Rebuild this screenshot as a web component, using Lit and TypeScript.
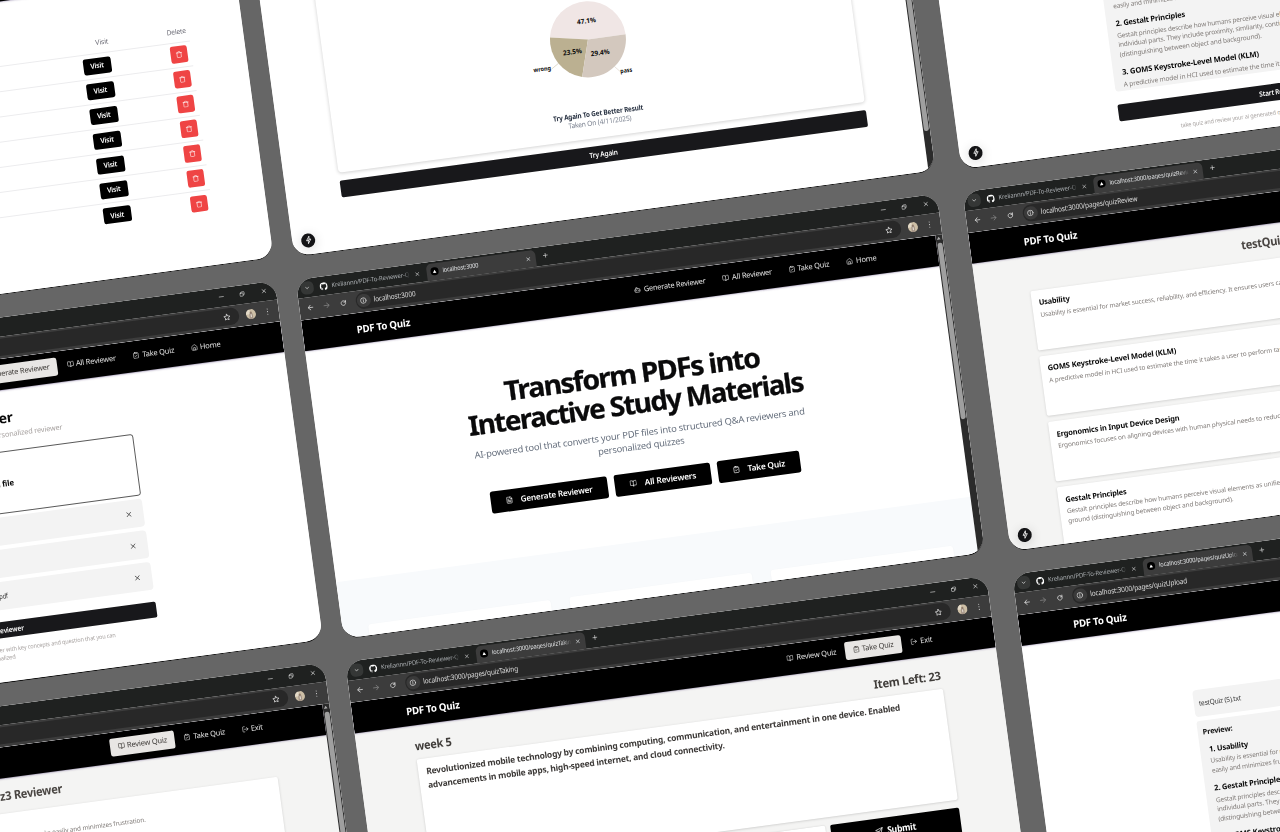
import { LitElement, html, css, svg, nothing } from "lit";
import { customElement, property, query } from "lit/decorators.js";
import { styleMap } from "lit/directives/style-map.js";

/* A single line of text, condensed or widened to an exact measure. */
@customElement("fit-line")
class FitLine extends LitElement {
  @property({ type: String }) text = "";
  @property({ type: Number }) w = 0;
  @query("span") private inner!: HTMLSpanElement;

  static styles = css`
    :host { display: inline-block; white-space: pre; flex: none; text-align: left; vertical-align: top; }
    span { display: inline-block; transform-origin: 0 50%; letter-spacing: var(--track, -0.022em); }
  `;

  updated() {
    if (!this.w) return;
    const natural = parseFloat(getComputedStyle(this.inner).width);
    this.inner.style.transform = `scaleX(${this.w / natural})`;
    this.style.width = `${this.w}px`;
  }

  render() {
    return html`<span>${this.text}</span>`;
  }
}

const fit = (text: string, w = 0, cls = "") =>
  html`<fit-line class=${cls} .text=${text} .w=${w}></fit-line>`;

const ICONS: Record<string, unknown> = {
  bot: svg`<path d="M12 8V4H8"/><rect width="16" height="12" x="4" y="8" rx="2"/><path d="M2 14h2M20 14h2M15 13v2M9 13v2"/>`,
  book: svg`<path d="M12 7v14"/><path d="M3 18a1 1 0 0 1-1-1V4a1 1 0 0 1 1-1h5a4 4 0 0 1 4 4 4 4 0 0 1 4-4h5a1 1 0 0 1 1 1v13a1 1 0 0 1-1 1h-6a3 3 0 0 0-3 3 3 3 0 0 0-3-3z"/>`,
  clip: svg`<rect width="8" height="4" x="8" y="2" rx="1"/><path d="M16 4h2a2 2 0 0 1 2 2v14a2 2 0 0 1-2 2H6a2 2 0 0 1-2-2V6a2 2 0 0 1 2-2h2"/><path d="m9 14 2 2 4-4"/>`,
  home: svg`<path d="M15 21v-8a1 1 0 0 0-1-1h-4a1 1 0 0 0-1 1v8"/><path d="M3 10a2 2 0 0 1 .7-1.5l7-6a2 2 0 0 1 2.6 0l7 6A2 2 0 0 1 21 10v9a2 2 0 0 1-2 2H5a2 2 0 0 1-2-2z"/>`,
  exit: svg`<path d="M9 21H5a2 2 0 0 1-2-2V5a2 2 0 0 1 2-2h4"/><path d="m16 17 5-5-5-5M21 12H9"/>`,
  file: svg`<path d="M15 2H6a2 2 0 0 0-2 2v16a2 2 0 0 0 2 2h12a2 2 0 0 0 2-2V7Z"/><path d="M14 2v4a2 2 0 0 0 2 2h4M10 9H8M16 13H8M16 17H8"/>`,
  trash: svg`<path d="M3 6h18M19 6v14a2 2 0 0 1-2 2H7a2 2 0 0 1-2-2V6M8 6V4a2 2 0 0 1 2-2h4a2 2 0 0 1 2 2v2"/>`,
  send: svg`<path d="M22 2 11 13M22 2l-7 20-4-9-9-4Z"/>`,
  x: svg`<path d="M5 5l14 14M19 5 5 19"/>`,
  plus: svg`<path d="M12 4v16M4 12h16"/>`,
  down: svg`<path d="m5 9 7 7 7-7"/>`,
  back: svg`<path d="M21 12H4M11 4l-8 8 8 8"/>`,
  fwd: svg`<path d="M3 12h17M13 4l8 8-8 8"/>`,
  reload: svg`<path d="M20 12a8 8 0 1 1-2.5-5.8L20 8.5M20 3v6h-6"/>`,
  info: svg`<circle cx="12" cy="12" r="9.5"/><path d="M12 11v6M12 6.7v1"/>`,
  star: svg`<path d="m12 2.5 2.9 6.3 6.8.8-5 4.700 1.300 6.800-6-3.400-6 3.400 1.300-6.800-5-4.700 6.800-.8z"/>`,
  min: svg`<path d="M3 12h18"/>`,
  restore: svg`<rect x="3" y="8" width="13" height="13" rx="2"/><path d="M8 7V5a2 2 0 0 1 2-2h9a2 2 0 0 1 2 2v9a2 2 0 0 1-2 2h-2"/>`,
  kebab: svg`<path d="M12 3.500v.1M12 12v.1M12 20.500v.1"/>`,
  bolt: svg`<path d="M13.500 3 6 13.500h5.500M10.500 21 18 10.500h-5.500M13.500 3v7.500M10.500 21v-7.500"/>`,
};

const icon = (name: string, cls = "") =>
  html`<svg class="icon ${cls}" viewBox="0 0 24 24">${ICONS[name]}</svg>`;

const github = html`<svg class="gh" viewBox="0 0 16 16"><path d="M8 0C3.580 0 0 3.580 0 8c0 3.540 2.290 6.530 5.470 7.590.4.070.55-.17.55-.38v-1.490c-2.230.48-2.700-.95-2.700-.95-.36-.92-.89-1.170-.89-1.170-.73-.5.060-.49.060-.49.8.060 1.230.83 1.230.83.72 1.220 1.870.87 2.330.66.070-.52.280-.87.510-1.070-1.780-.2-3.640-.89-3.640-3.950 0-.87.310-1.590.82-2.150-.08-.2-.36-1.020.08-2.120 0 0 .67-.21 2.200.82a7.600 7.600 0 0 1 4 0c1.530-1.040 2.200-.82 2.200-.82.44 1.100.16 1.920.08 2.120.51.56.82 1.270.82 2.150 0 3.070-1.870 3.750-3.650 3.950.29.25.54.73.54 1.480v2.200c0 .21.15.46.55.38A8 8 0 0 0 16 8c0-4.420-3.580-8-8-8z"/></svg>`;

type NavItem = { icon: string; label: string; w: number };

const MAIN_NAV: NavItem[] = [
  { icon: "bot", label: "Generate Reviewer", w: 62.3 },
  { icon: "book", label: "All Reviewer", w: 40.2 },
  { icon: "clip", label: "Take Quiz", w: 32 },
  { icon: "home", label: "Home", w: 20.8 },
];
const QUIZ_NAV: NavItem[] = [
  { icon: "book", label: "Review Quiz", w: 40.3 },
  { icon: "clip", label: "Take Quiz", w: 32 },
  { icon: "exit", label: "Exit", w: 12 },
];

type Win = {
  x: number;
  y: number;
  tab: string;
  tabW: number;
  url: string;
  urlW: number;
  nav: NavItem[];
  active?: string;
  scroll?: "short" | "long";
  tint?: boolean;
  badge?: boolean;
  body: () => unknown;
};

@customElement("app-root")
class AppRoot extends LitElement {
  static styles = css`
    :host {
      display: block; position: relative; width: 1280px; height: 832px; overflow: hidden;
      background: #666; font-family: "Noto Sans", "Open Sans", sans-serif; line-height: 1;
    }
    * { box-sizing: border-box; }
    .icon { width: 7px; height: 7px; fill: none; stroke: currentColor; stroke-width: 2; stroke-linecap: round; stroke-linejoin: round; flex: none; display: block; }
    .win {
      position: absolute; left: 0; top: 0; width: 646.500px; height: 362.500px; transform-origin: 0 0;
      border-radius: 17px; overflow: hidden; background: #fff; display: flex; flex-direction: column;
      border-bottom: 0.8px solid #151515;
    }
    /* browser frame */
    .tabs { height: 18.5px; flex: none; background: #1f2120; display: flex; align-items: center; color: #ddd; }
    .drop { width: 13px; height: 13px; border-radius: 5px; background: #353736; display: grid; place-items: center; margin-left: 3.500px; flex: none; }
    .drop .icon { width: 5px; height: 5px; stroke-width: 3; }
    .tab { display: flex; align-items: center; height: 16.5px; align-self: flex-end; padding-bottom: 0; font-size: 6.400px; }
    .tab.idle { width: 114.5px; padding-left: 6.6px; color: #ccc; }
    .gh { width: 8.2px; height: 8.2px; fill: #fff; flex: none; }
    .tab.idle .label { margin-left: 3.600px; width: 79px; overflow: hidden; color: #a9adb0; mask-image: linear-gradient(90deg, #000 92%, transparent); }
    .tab.idle .icon, .tab.live .icon { width: 5px; height: 5px; stroke-width: 2.800; }
    .tab.idle .icon { margin-left: 5.500px; }
    .tab.live { width: 110.3px; background: #3c3c3c; border-radius: 5px 5px 0 0; padding-left: 4px; color: #dfe1e3; }
    .fav { width: 7.6px; height: 7.6px; border-radius: 50%; background: #000; display: grid; place-items: center; flex: none; }
    .fav svg { width: 4px; height: 4px; fill: #fff; display: block; }
    .tab.live .label { margin-left: 4.200px; width: 80px; overflow: hidden; mask-image: linear-gradient(90deg, #000 88%, transparent); }
    .tab.live .icon { margin-left: 4.700px; }
    .plus { width: 5.8px; height: 5.8px; margin-left: 6.500px; stroke-width: 2.600; }
    .ctl { margin-left: auto; display: flex; gap: 15.900px; padding-right: 8.800px; color: #ececec; }
    .ctl .icon { width: 5.7px; height: 5.7px; stroke-width: 2.300; }
    .bar { height: 22px; flex: none; background: #3c3c3c; display: flex; align-items: center; padding-left: 7.500px; color: #dedede; }
    .bar > .icon { width: 6.800px; height: 6.800px; stroke-width: 2.600; margin-right: 10.200px; }
    .bar > .icon.dim { color: #858585; }
    .bar > .icon.rl { margin-right: 8.300px; }
    .omni { width: 550.5px; height: 16.4px; border-radius: 8.200px; background: #282828; display: flex; align-items: center; padding: 0 8.800px 0 1.500px; font-size: 7.3px; }
    .site { width: 13.5px; height: 13.5px; border-radius: 50%; background: #3a3a3a; display: grid; place-items: center; margin-right: 3px; flex: none; }
    .site .icon { width: 7px; height: 7px; stroke-width: 2.300; }
    .omni .icon.st { width: 7.600px; height: 7.600px; margin-left: auto; stroke-width: 2.300; }
    .ava { width: 10px; height: 10px; border-radius: 50%; margin-left: 7px; flex: none; overflow: hidden; display: block; }
    .bar > .icon.kb { margin: 0 0 0 8.300px; width: 7.400px; height: 7.400px; stroke-width: 3.400; }
    /* page */
    .view { flex: 1; min-height: 0; display: flex; }
    .page { flex: 1; min-width: 0; display: flex; flex-direction: column; overflow: hidden; background: #fff; }
    .tint .page { background: #f4f4f3; }
    .track { width: 6.500px; flex: none; background: #2b2b2b; padding: 2.500px 0.900px 0; display: flex; flex-direction: column; align-items: center; color: #bbb; }
    .track svg { width: 4px; height: 3px; fill: #aaa; flex: none; display: block; }
    .thumb { width: 4.500px; border-radius: 2.500px; background: #9f9f9f; margin-top: 3px; height: 178px; }
    .thumb.long { height: 273px; }
    .nav { height: 31px; flex: none; background: #000; color: #fff; display: flex; align-items: center; justify-content: space-between; padding: 0 53.700px; box-shadow: 0 0.600px 1.800px rgba(70, 50, 110, 0.45); position: relative; }
    .brand { font-weight: 700; font-size: 10px; line-height: 14px; margin-top: 1.200px; }
    .items { display: flex; gap: 1.200px; }
    .item { display: flex; align-items: center; gap: 2.500px; height: 18px; padding: 0 7.900px; border-radius: 2.500px; font-size: 7.5px; color: #e2e2e2; margin-top: -0.500px; }
    .item.on { background: #e8e6e4; color: #3c3936; }
    .badge { position: absolute; left: 9px; top: 340.800px; width: 14px; height: 14px; border-radius: 50%; background: #141416; color: #fff; display: grid; place-items: center; box-shadow: 0 2px 12px rgba(0, 0, 0, 0.16); }
    .badge .icon { width: 9px; height: 9px; stroke-width: 2; }
    /* landing */
    .hero { height: 233px; flex: none; display: flex; flex-direction: column; align-items: center; padding-top: 51px; }
    h1 { --track: -0.055em; margin: 0; font-size: 27.200px; line-height: 30.5px; font-weight: 700; color: #0a0a0b; display: flex; flex-direction: column; align-items: center; -webkit-text-stroke: 0.250px #0a0a0b; }
    .lead { font-size: 9.1px; line-height: 12.8px; color: #67707e; display: flex; flex-direction: column; align-items: center; margin-top: 8.500px; }
    .cta { display: flex; gap: 7.700px; margin-top: 18px; }
    .btn { height: 22.600px; background: #000; color: #fff; border-radius: 2.500px; display: flex; align-items: center; padding: 0 14.800px; gap: 7.600px; font-size: 8.2px; font-weight: 600; }
    .btn .icon { width: 7.400px; height: 7.400px; }
    .band { flex: 1; background: #f8fafc; padding: 46px 24.300px 0 26.300px; display: flex; gap: 19px; }
    .tile { flex: 1; background: #fff; border-radius: 3px 3px 0 0; box-shadow: 0 0.500px 2px rgba(0, 0, 0, 0.04); }
    /* reviewer table */
    .table { padding: 44.800px 53.400px 0 50px; display: flex; flex-direction: column; font-size: 6.9px; }
    .tr { height: 25px; border-bottom: 0.700px solid #ececee; display: flex; align-items: center; justify-content: flex-end; color: #6c6c76; }
    .tr:last-child { border: 0; }
    .tr.head { height: 20.300px; padding-top: 1.500px; }
    .c1 { width: 80px; display: flex; justify-content: center; }
    .c2 { width: 25.500px; display: flex; justify-content: center; margin-left: 29.500px; }
    .head .c1 { position: relative; left: 7px; }
    .go { width: 28.500px; height: 16.200px; border-radius: 2.500px; background: #000; color: #fff; display: grid; place-items: center; font-weight: 600; font-size: 7.100px; }
    .rm { width: 17px; height: 16.800px; border-radius: 2.500px; background: #ef4444; color: #fff; display: grid; place-items: center; }
    .rm .icon { stroke-width: 1.900; }
    /* result */
    .result { padding: 20px 54.300px 0 54.900px; display: flex; flex-direction: column; gap: 8.200px; }
    .rcard { height: 193.700px; border-radius: 4px; background: #fff; box-shadow: 0 0.800px 4px rgba(0, 0, 0, 0.2); display: flex; flex-direction: column; align-items: center; padding-top: 38px; }
    .pie { width: 160px; height: 112px; display: block; flex: none; }
    .pie text { font-size: 6.8px; font-weight: 700; text-anchor: middle; fill: #0a0a0a; }
    .pie .cap { font-size: 6px; }
    .r1 { font-size: 7.2px; font-weight: 700; color: #263040; line-height: 9px; margin-top: 14px; }
    .r2 { font-size: 7.100px; color: #7b8290; line-height: 9px; }
    .dark { height: 16.500px; background: #18181b; color: #fff; border-radius: 2px; display: grid; place-items: center; font-size: 7.1px; font-weight: 600; flex: none; }
    /* generator */
    .narrow { width: 324.600px; align-self: center; display: flex; flex-direction: column; }
    .gh1 { font-size: 13.800px; font-weight: 700; line-height: 16px; align-self: center; margin-top: 20.500px; color: #0a0a0a; }
    .gsub { font-size: 7.300px; line-height: 10px; color: #a7a2a0; align-self: center; margin-top: 3px; }
    .zone { height: 61.800px; border: 0.800px solid #5a5a5a; border-radius: 3px; margin-top: 12.100px; display: grid; place-items: center; font-size: 8px; font-weight: 700; color: #0a0a0a; padding-top: 2px; }
    .rows { display: flex; flex-direction: column; gap: 4.500px; margin-top: 3.500px; }
    .frow { height: 27.500px; border-radius: 4px; background: #f3f3f3; display: flex; align-items: center; justify-content: space-between; padding: 0 10.800px 0 5px; font-size: 7.100px; color: #3a3a3a; }
    .frow .icon { width: 6.600px; height: 6.600px; stroke-width: 2.600; }
    .narrow .dark { margin-top: 12px; }
    .note { font-size: 6px; line-height: 8.500px; color: #a7a2a0; align-self: center; display: flex; flex-direction: column; align-items: center; margin-top: 7.500px; }
    /* upload */
    .up { width: 313.500px; align-self: flex-start; margin: 67.500px 0 0 162.900px; display: flex; flex-direction: column; }
    .up .frow { height: 26.700px; }
    .prev { height: 136.500px; margin-top: 3.900px; background: #f3f3f3; border-radius: 3px; padding: 6.500px 5px 0; overflow: hidden; font-size: 6.600px; line-height: 9.600px; color: #827d7a; display: flex; flex-direction: column; align-items: flex-start; flex: none; }
    .prev .pt { font-size: 7.400px; line-height: 10px; font-weight: 700; color: #111; }
    .qs { display: flex; flex-direction: column; align-items: flex-start; padding-left: 4px; }
    .qs .qt { font-size: 7.600px; line-height: 12px; font-weight: 700; color: #0a0a0a; margin: 6.700px 0 1.600px; }
    .line { display: flex; white-space: pre; }
    .dark.left { place-items: center start; padding-left: 142.300px; margin-top: 13px; }
    .note.left { align-self: flex-start; padding-left: 60px; margin-top: 8.300px; flex-direction: row; white-space: pre; }
    /* review */
    .rtitle { font-size: 12px; font-weight: 700; color: #4a4643; line-height: 15px; align-self: center; margin-top: 10.900px; }
    .cards { margin: 9.200px 53.700px 0 54.400px; display: flex; flex-direction: column; gap: 5.800px; }
    .card { height: 60.300px; flex: none; background: #fff; border-radius: 2px; box-shadow: 0 0.700px 2.500px rgba(0, 0, 0, 0.16); padding: 6.800px; display: flex; flex-direction: column; align-items: flex-start; color: #827d7a; font-size: 6.400px; line-height: 10px; }
    .card .ct { font-size: 7.600px; line-height: 12px; font-weight: 700; color: #0a0a0a; margin-bottom: 1.300px; }
    /* taking */
    .take { padding: 12.800px 58px 0; display: flex; flex-direction: column; }
    .trow { display: flex; justify-content: space-between; font-size: 11.700px; font-weight: 700; line-height: 16px; color: #403d3a; }
    .ask { height: 112.500px; background: #fff; border-radius: 2px; box-shadow: 0 0.700px 2.500px rgba(0, 0, 0, 0.18); margin-top: 5.500px; padding: 7.700px 7.500px; display: flex; flex-direction: column; align-items: flex-start; font-size: 8.600px; font-weight: 700; line-height: 13.100px; color: #3d3a38; }
    .answer { display: flex; gap: 4.200px; margin-top: 7.700px; }
    .field { flex: 1; height: 26px; background: #fff; border-radius: 2px; box-shadow: 0 0 1.500px rgba(0, 0, 0, 0.2); }
    .submit { width: 130px; height: 26px; background: #000; color: #fff; border-radius: 2px; display: flex; align-items: center; justify-content: center; gap: 4.500px; font-size: 9.400px; font-weight: 700; }
    .submit .icon { width: 8px; height: 8px; }
    .take .trow, .take .ask, .take .answer { flex: none; }
  `;

  private home = () => html`
    <div class="hero">
      <h1>${fit("Transform PDFs into", 257)}${fit("Interactive Study Materials", 337)}</h1>
      <div class="lead">
        ${fit("AI-powered tool that converts your PDF files into structured Q&A reviewers and", 333)}
        ${fit("personalized quizzes", 87)}
      </div>
      <div class="cta">
        <div class="btn">${icon("file")}${fit("Generate Reviewer", 72.5)}</div>
        <div class="btn">${icon("book")}${fit("All Reviewers", 52)}</div>
        <div class="btn">${icon("clip")}${fit("Take Quiz", 37.5)}</div>
      </div>
    </div>
    <div class="band"><div class="tile"></div><div class="tile"></div><div class="tile"></div></div>
  `;

  private list = () => html`
    <div class="table">
      <div class="tr head"><div class="c1">${fit("Visit", 13)}</div><div class="c2">${fit("Delete", 19.3)}</div></div>
      ${[1, 2, 3, 4, 5, 6, 7].map(
        () => html`<div class="tr">
          <div class="c1"><div class="go">${fit("Visit", 13.5)}</div></div>
          <div class="c2"><div class="rm">${icon("trash")}</div></div>
        </div>`
      )}
    </div>
  `;

  private result = () => html`
    <div class="result">
      <div class="rcard">
        <svg class="pie" viewBox="-80 -56 160 112">
          <path fill="#f0e6e5" d="M0 0H38A38 38 0 0 0 -37.400 -6.900Z" />
          <path fill="#bbb091" d="M0 0L-37.400 -6.900A38 38 0 0 0 -10.700 36.500Z" />
          <path fill="#d3c8be" d="M0 0L-10.700 36.500A38 38 0 0 0 38 0Z" />
          <path stroke="#d5cdb8" stroke-width=".7" d="M-40 24.600-32.500 19.900" />
          <path stroke="#e0d8d0" stroke-width=".7" d="M27.500 36 22.500 30.200" />
          <text x="1" y="-16.200" textLength="19" lengthAdjust="spacingAndGlyphs">47.1%</text>
          <text x="-17" y="12.700" textLength="19" lengthAdjust="spacingAndGlyphs">23.5%</text>
          <text x="10.400" y="17.200" textLength="19" lengthAdjust="spacingAndGlyphs">29.4%</text>
          <text class="cap" x="-49.300" y="25.400" textLength="17.500" lengthAdjust="spacingAndGlyphs">wrong</text>
          <text class="cap" x="33.800" y="37.800" textLength="11.800" lengthAdjust="spacingAndGlyphs">pass</text>
        </svg>
        <div class="r1">${fit("Try Again To Get Better Result", 90.5)}</div>
        <div class="r2">${fit("Taken On (4/11/2025)", 63.5)}</div>
      </div>
      <div class="dark">${fit("Try Again", 28.5)}</div>
    </div>
  `;

  private generate = () => html`
    <div class="narrow">
      <div class="gh1">${fit("PDF Reviewer", 91)}</div>
      <div class="gsub">${fit("Upload a PDF file to generate your personalized reviewer", 188)}</div>
      <div class="zone">${fit("Click to upload a file", 75.5)}</div>
      <div class="rows">
        ${["Lesson 1 Introduction.pdf", "Lesson 2 Principles.pdf", "Lesson 3 Human Computer Interaction and its Design Principles.pdf"].map(
          (f, i) => html`<div class="frow">${fit(f, i === 2 ? 174.5 : 75)}${icon("x")}</div>`
        )}
      </div>
      <div class="dark">${fit("Generate Reviewer", 58)}</div>
      <div class="note">
        <div class="line">${fit("Our AI will analyze your PDF and generate a review", 121)}${fit("er with key concepts and question that you can", 117)}</div>
        ${fit("personalized", 33)}
      </div>
    </div>
  `;

  private upload = () => html`
    <div class="up">
      <div class="frow">${fit("testQuiz (5).txt", 42.5)}${icon("x")}</div>
      <div class="prev">
        <div class="pt">${fit("Preview:", 30)}</div>
        <div class="qs">
          <div class="qt">${fit("1. Usability", 39.3)}</div>
          <div class="line">${fit("Usability is essential for", 68)} market success, reliability, and efficiency.</div>
          <div class="line">${fit("easily and minimizes fru", 70)}stration.</div>
          <div class="qt">${fit("2. Gestalt Principles", 70)}</div>
          <div class="line">${fit("Gestalt principles describe how humans perceive visual e", 163.5)}lements as unified</div>
          <div class="line">${fit("individual parts. They include proximity, similarity, conti", 162.5)}nuity, closure</div>
          <div class="line">${fit("(distinguishing between object and background).", 143)}</div>
          <div class="qt">${fit("3. GOMS Keystroke-Level Model (KLM)", 138)}</div>
          <div class="line">${fit("A predictive model in HCI used to estimate the time it", 157)} takes a user to perform</div>
        </div>
      </div>
      <div class="dark left">${fit("Start Review", 37.5)}</div>
      <div class="note left">${fit("take quiz and review your ai generated", 96)} questions and answers</div>
    </div>
  `;

  private review = () => html`
    <div class="rtitle">${fit("testQuiz3 Reviewer", 102)}</div>
    <div class="cards">
      <div class="card">
        <div class="ct">${fit("Usability", 31)}</div>
        ${fit("Usability is essential for market success, reliability, and efficiency. It ensures users can complete tasks easily and minimizes frustration.", 388.5)}
      </div>
      <div class="card">
        <div class="ct">${fit("GOMS Keystroke-Level Model (KLM)", 129.5)}</div>
        <div class="line">${fit("A predictive model in HCI used to estimate the time it takes a user to perform ta", 232)}sks</div>
      </div>
      <div class="card">
        <div class="ct">${fit("Ergonomics in Input Device Design", 123.8)}</div>
        <div class="line">${fit("Ergonomics focuses on aligning devices with human physical needs to reduc", 224)}e strain</div>
      </div>
      <div class="card">
        <div class="ct">${fit("Gestalt Principles", 61.5)}</div>
        <div class="line">${fit("Gestalt principles describe how humans perceive visual elements as unifie", 215)}d wholes</div>
        ${fit("ground (distinguishing between object and background).", 166.5)}
      </div>
    </div>
  `;

  private take = () => html`
    <div class="take">
      <div class="trow">${fit("week 5", 37)}${fit("Item Left: 23", 67.5)}</div>
      <div class="ask">
        ${fit("Revolutionized mobile technology by combining computing, communication, and entertainment in one device. Enabled", 478)}
        ${fit("advancements in mobile apps, high-speed internet, and cloud connectivity.", 299)}
      </div>
      <div class="answer">
        <div class="field"></div>
        <div class="submit">${icon("send")}${fit("Submit", 29)}</div>
      </div>
    </div>
  `;

  private wins: Win[] = [
    { x: -416, y: -15.3, tab: "localhost:3000", tabW: 36, url: "localhost:3000", urlW: 42, nav: MAIN_NAV, body: this.list },
    { x: 246, y: -102.3, tab: "localhost:3000", tabW: 36, url: "localhost:3000", urlW: 42, nav: QUIZ_NAV, scroll: "long", badge: true, body: this.result },
    { x: 913.3, y: -189.7, tab: "localhost:3000", tabW: 36, url: "localhost:3000", urlW: 42, nav: MAIN_NAV, badge: true, body: this.upload },
    { x: -366.5, y: 366.9, tab: "localhost:3000", tabW: 36, url: "localhost:3000", urlW: 42, nav: MAIN_NAV, active: "Generate Reviewer", body: this.generate },
    { x: 295.5, y: 279.9, tab: "localhost:3000", tabW: 36.2, url: "localhost:3000", urlW: 42, nav: MAIN_NAV, scroll: "short", body: this.home },
    { x: 962.5, y: 192.3, tab: "localhost:3000/pages/quizReview", tabW: 85, url: "localhost:3000/pages/quizReview", urlW: 97.5, nav: QUIZ_NAV, active: "Review Quiz", scroll: "short", tint: true, badge: true, body: this.review },
    { x: -317.5, y: 748.9, tab: "localhost:3000/pages/quizReview", tabW: 85, url: "localhost:3000/pages/quizReview", urlW: 97.5, nav: QUIZ_NAV, active: "Review Quiz", scroll: "short", tint: true, body: this.review },
    { x: 345, y: 662.1, tab: "localhost:3000/pages/quizTaking", tabW: 83, url: "localhost:3000/pages/quizTaking", urlW: 95.5, nav: QUIZ_NAV, active: "Take Quiz", tint: true, body: this.take },
    { x: 1012, y: 574.6, tab: "localhost:3000/pages/quizUpload", tabW: 85, url: "localhost:3000/pages/quizUpload", urlW: 97.5, nav: MAIN_NAV, body: this.upload },
  ];

  private frame(w: Win) {
    return html`
      <div class="tabs">
        <div class="drop">${icon("down")}</div>
        <div class="tab idle">
          ${github}
          <div class="label">${fit("Kreliannn/PDF-To-Reviewer-Quiz", 86)}</div>
          ${icon("x")}
        </div>
        <div class="tab live">
          <div class="fav"><svg viewBox="0 0 10 10"><path d="M5 1 9.500 9H.5Z" /></svg></div>
          <div class="label">${fit(w.tab, w.tabW)}</div>
          ${icon("x")}
        </div>
        ${icon("plus", "plus")}
        <div class="ctl">${icon("min")}${icon("restore")}${icon("x")}</div>
      </div>
      <div class="bar">
        ${icon("back")}${icon("fwd", "dim")}${icon("reload", "rl")}
        <div class="omni">
          <div class="site">${icon("info")}</div>
          ${fit(w.url, w.urlW)}${icon("star", "st")}
        </div>
        <svg class="ava" viewBox="0 0 10 10">
          <rect width="10" height="10" fill="#cdbfa6" />
          <rect x="0" y="0" width="4" height="5" fill="#e3dac8" />
          <path d="M3.200 10V5.500a1.800 1.800 0 0 1 3.600 0V10Z" fill="#a59588" />
          <circle cx="5" cy="3.500" r="1.100" fill="#8f7b6c" />
          <path d="M4.600 5.200h.9V8h-.9z" fill="#efe9e0" />
        </svg>
        ${icon("kebab", "kb")}
      </div>
    `;
  }

  render() {
    return this.wins.map(
      (w) => html`
        <section class="win ${w.tint ? "tint" : ""}" style=${styleMap({ transform: `translate(${w.x}px, ${w.y}px) rotate(-7.66deg)` })}>
          ${this.frame(w)}
          <div class="view">
            <div class="page">
              <div class="nav">
                <div class="brand">${fit("PDF To Quiz", 53.8)}</div>
                <div class="items">
                  ${w.nav.map((n) => html`<div class="item ${n.label === w.active ? "on" : ""}">${icon(n.icon)}${fit(n.label, n.w)}</div>`)}
                </div>
              </div>
              ${w.body()}
            </div>
            ${w.scroll
              ? html`<div class="track"><svg viewBox="0 0 8 6"><path d="M4 0 8 6H0Z" /></svg><div class="thumb ${w.scroll}"></div></div>`
              : nothing}
          </div>
          ${w.badge ? html`<div class="badge">${icon("bolt")}</div>` : nothing}
        </section>
      `
    );
  }
}
